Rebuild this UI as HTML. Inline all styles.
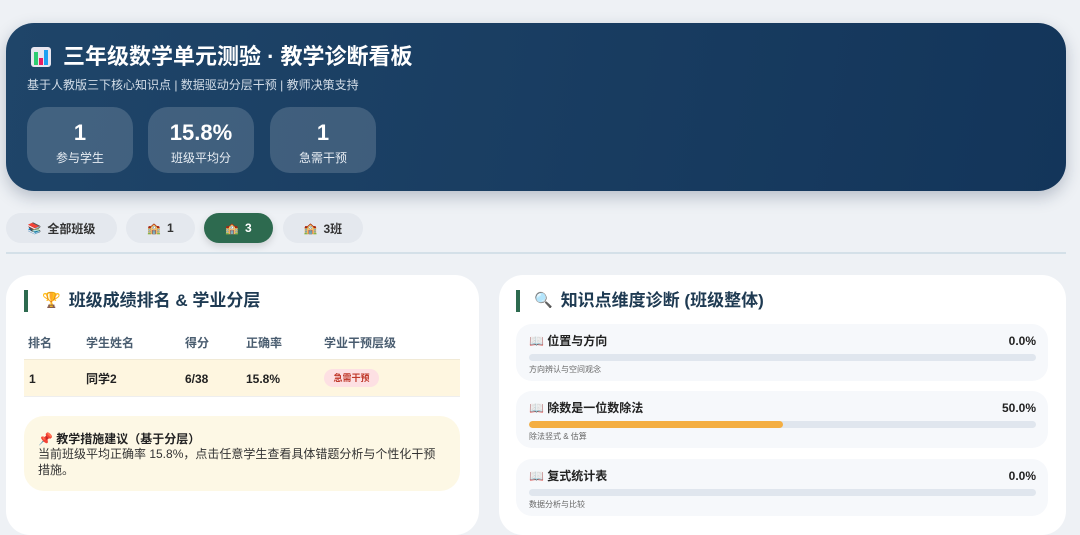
<!DOCTYPE html>
<html><head><meta charset="utf-8"><style>
*{margin:0;padding:0;box-sizing:border-box}
body{width:1080px;height:513px;overflow:hidden;background:#eef1f5;font-family:"Liberation Sans","Noto Sans CJK SC",sans-serif;position:relative}
.a{position:absolute}
.hdr{left:6px;top:23px;width:1060px;height:168px;border-radius:28px;background:linear-gradient(100deg,#1f4569,#13355a);box-shadow:0 6px 16px rgba(20,40,70,.25)}
.stat{top:107px;width:106px;height:66px;border-radius:20px;background:rgba(255,255,255,.16);color:#fff;text-align:center}
.stat b{display:block;font-size:22px;margin-top:14px;line-height:24px}
.stat span{display:block;font-size:12px;margin-top:4px;color:#e8eef4}
.tab{top:213px;height:30px;border-radius:15px;background:#e4e8ee;font-size:12px;font-weight:bold;color:#333;display:flex;align-items:center;justify-content:center;gap:6px}
.card{background:#fff;border-radius:24px}
.ttl{font-size:17px;font-weight:bold;color:#1e3a52;line-height:22px;height:22px;display:flex;align-items:center;gap:8px}
.bar{width:4px;height:22px;background:#2d6a4f}
.th{top:335px;font-size:12px;font-weight:bold;color:#4a5d70;line-height:16px}
.td{top:370px;font-size:12px;font-weight:bold;color:#222;line-height:18px;height:18px;display:flex;align-items:center}
.kp{left:516px;width:532px;height:57px;background:#f6f8fb;border-radius:16px}
.kp .n{position:absolute;left:13px;top:9px;font-size:12px;font-weight:bold;color:#222;line-height:16px;display:flex;align-items:center;gap:4px}
.kp .p{position:absolute;right:12px;top:9px;font-size:12px;font-weight:bold;color:#222;line-height:16px}
.kp .t{position:absolute;left:13px;top:30px;width:507px;height:7px;border-radius:4px;background:#e0e6ee;overflow:hidden}
.kp .l{position:absolute;left:13px;top:40px;font-size:8px;color:#666}
</style></head><body>
<div class="a hdr"></div>
<div class="a" style="left:31px;top:47px;width:20px;height:20px;border-radius:3px;background:#e8e6ef"><div class="a" style="left:3px;top:5px;width:4px;height:13px;background:#2ecc71"></div><div class="a" style="left:8px;top:11px;width:4px;height:7px;background:#e91e63"></div><div class="a" style="left:13px;top:3px;width:4px;height:15px;background:#1da1f2"></div></div>
<div class="a" style="left:63px;top:43px;font-size:22px;font-weight:bold;color:#fff;line-height:28px">三年级数学单元测验 · 教学诊断看板</div>
<div class="a" style="left:27px;top:76px;font-size:12px;color:#d3dde8">基于人教版三下核心知识点 | 数据驱动分层干预 | 教师决策支持</div>
<div class="a stat" style="left:27px"><b>1</b><span>参与学生</span></div>
<div class="a stat" style="left:148px"><b>15.8%</b><span>班级平均分</span></div>
<div class="a stat" style="left:270px"><b>1</b><span>急需干预</span></div>

<div class="a tab" style="left:6px;width:111px"><span style="font-size:11px">📚</span>全部班级</div>
<div class="a tab" style="left:126px;width:69px"><span style="font-size:11px">🏫</span>1</div>
<div class="a tab" style="left:204px;width:69px;background:#2d6a4f;color:#fff;box-shadow:0 3px 8px rgba(0,0,0,.15)"><span style="font-size:11px">🏫</span>3</div>
<div class="a tab" style="left:283px;width:80px"><span style="font-size:11px">🏫</span>3班</div>
<div class="a" style="left:6px;top:252px;width:1060px;height:2px;background:#d4e0e8"></div>

<div class="a card" style="left:6px;top:275px;width:473px;height:260px"></div>
<div class="a bar" style="left:24px;top:290px"></div>
<div class="a ttl" style="left:42px;top:290px"><span style="font-size:15px">🏆</span>班级成绩排名 &amp; 学业分层</div>
<div class="a th" style="left:28px">排名</div><div class="a th" style="left:86px">学生姓名</div><div class="a th" style="left:185px">得分</div><div class="a th" style="left:246px">正确率</div><div class="a th" style="left:324px">学业干预层级</div>
<div class="a" style="left:24px;top:359px;width:436px;height:38px;background:#fef6e0;border-top:1px solid #f1ead6;border-bottom:1px solid #eee"></div>
<div class="a td" style="left:29px">1</div><div class="a td" style="left:86px">同学2</div><div class="a td" style="left:185px">6/38</div><div class="a td" style="left:246px">15.8%</div>
<div class="a" style="left:324px;top:369px;width:55px;height:18px;border-radius:9px;background:#fde0e3;color:#c0392b;font-size:9px;font-weight:bold;text-align:center;line-height:18px">急需干预</div>
<div class="a" style="left:24px;top:416px;width:436px;height:75px;background:#fdf8e5;border-radius:20px"></div>
<div class="a" style="left:38px;top:430px;font-size:12px;font-weight:bold;color:#222">📌 教学措施建议（基于分层）</div>
<div class="a" style="left:38px;top:446px;width:402px;font-size:12px;line-height:16px;color:#333">当前班级平均正确率 15.8%，点击任意学生查看具体错题分析与个性化干预措施。</div>

<div class="a card" style="left:499px;top:275px;width:567px;height:260px"></div>
<div class="a bar" style="left:516px;top:290px"></div>
<div class="a ttl" style="left:534px;top:290px"><span style="font-size:15px">🔍</span>知识点维度诊断 (班级整体)</div>
<div class="a kp" style="top:324px"><div class="n">📖 位置与方向</div><div class="p">0.0%</div><div class="t"></div><div class="l">方向辨认与空间观念</div></div>
<div class="a kp" style="top:391px"><div class="n">📖 除数是一位数除法</div><div class="p">50.0%</div><div class="t"><div style="width:50%;height:100%;background:#f4ae42;border-radius:4px"></div></div><div class="l">除法竖式 &amp; 估算</div></div>
<div class="a kp" style="top:459px"><div class="n">📖 复式统计表</div><div class="p">0.0%</div><div class="t"></div><div class="l">数据分析与比较</div></div>
</body></html>
